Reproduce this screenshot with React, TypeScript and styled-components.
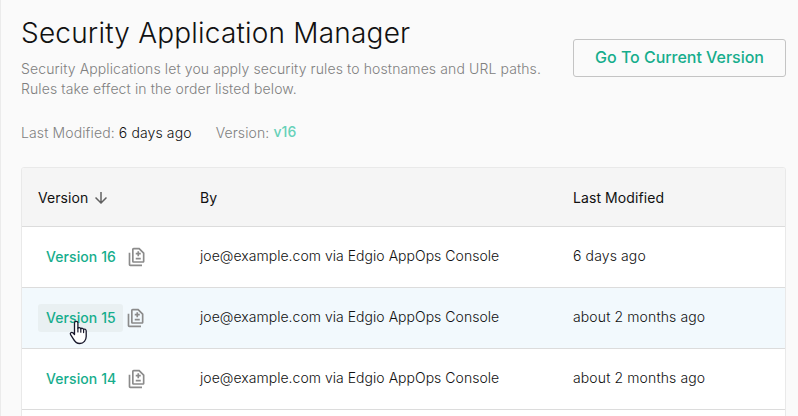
import React from "react";
import styled, { createGlobalStyle } from "styled-components";
import { MdArrowDownward, MdOutlineDifference } from "react-icons/md";

const GlobalStyle = createGlobalStyle`
  * { box-sizing: border-box; }
  body {
    margin: 0;
    background: #fafafa;
    font-family: Inter, "Liberation Sans", sans-serif;
    overflow: hidden;
  }
`;

const Page = styled.main`
  height: 416px;
  overflow: hidden;
  border-left: 1px solid #ebebeb;
  padding: 13px 12px 0 20px;
  background: #fafafa;
`;

const Header = styled.header`
  display: flex;
  justify-content: space-between;
  align-items: flex-start;
`;

const Title = styled.h1`
  margin: 0;
  font-size: 28px;
  line-height: 40px;
  font-weight: 300;
  letter-spacing: 0.2px;
  color: #111;
  white-space: nowrap;
`;

const Description = styled.p`
  margin: 6px 0 0;
  font-size: 14px;
  line-height: 20px;
  font-weight: 300;
  letter-spacing: 0.115px;
  color: #808080;
  white-space: nowrap;
`;

const OutlineButton = styled.button`
  width: 213px;
  height: 38px;
  margin-top: 26px;
  padding: 0 0 2px;
  border: 1px solid #c4c4c4;
  border-radius: 3px;
  background: transparent;
  color: #16ad8c;
  font: 500 16px/24px Inter, sans-serif;
  letter-spacing: -0.03px;
  white-space: nowrap;
`;

const Meta = styled.div`
  display: flex;
  gap: 24px;
  margin-top: 24px;
  font-size: 14px;
  line-height: 20px;
  font-weight: 300;
  letter-spacing: 0.12px;
  color: #808080;
  white-space: nowrap;
`;

const MetaItem = styled.div`
  display: flex;
  gap: 4px;
`;

const MetaValue = styled.span`
  color: #111;
`;

const VersionTag = styled.span`
  font-weight: 500;
  line-height: 18px;
  color: #66d1b8;
`;

const Table = styled.div`
  width: 765px;
  margin-top: 24px;
  border: 1px solid #e9e9e9;
  border-radius: 3px 3px 0 0;
  background: #fff;
  overflow: hidden;
`;

const Row = styled.div<{ $head?: boolean; $hovered?: boolean }>`
  display: grid;
  grid-template-columns: 162px 373px 1fr;
  align-items: center;
  height: ${(p) => (p.$head ? 59 : 61)}px;
  padding: ${(p) => (p.$head ? "2px 0 0 16px" : "0 0 0 16px")};
  border-bottom: 1px solid #dcdcdc;
  background: ${(p) => (p.$head ? "#f5f5f5" : p.$hovered ? "#f2f9fd" : "#fff")};
  font-size: 14px;
  line-height: 20px;
  font-weight: ${(p) => (p.$head ? 400 : 300)};
  letter-spacing: 0.08px;
  color: #111;
  white-space: nowrap;
`;

const Cell = styled.div`
  display: flex;
  align-items: center;
`;

const TextCell = styled.div`
  padding-bottom: 2px;
  letter-spacing: 0.03px;
`;

const DateCell = styled(TextCell)`
  letter-spacing: 0.12px;
`;

const SortIcon = styled(MdArrowDownward)`
  margin-left: 4px;
  color: #606060;
`;

const VersionLink = styled.a<{ $hovered?: boolean }>`
  position: relative;
  display: block;
  width: 85px;
  height: 28px;
  padding: 0 8px;
  border-radius: 3px;
  background: ${(p) => (p.$hovered ? "#e9f0f2" : "transparent")};
  color: #16ad8c;
  font-weight: 500;
  line-height: 28px;
`;

const DiffIcon = styled(MdOutlineDifference)<{ $hovered?: boolean }>`
  margin-left: ${(p) => (p.$hovered ? 3 : 4)}px;
  color: #8b8b8b;
`;

const Pointer = styled.svg`
  position: absolute;
  left: 31px;
  top: 16px;
`;

const HandCursor = () => (
  <Pointer width="19" height="25" viewBox="0 0 19 25" aria-hidden="true">
    <path
      d="M5.5 14.5V3a1.7 1.7 0 0 1 3.4 0v5.2c.5-.8 2.4-.8 2.9.5.7-.8 2.4-.5 2.8.7.9-.7 2.6-.2 2.6 1.6v5.5c0 3.6-2.5 7-6.4 7-3.2 0-5.1-1.8-6.5-4.6l-2.7-4.2c-1-1.7.9-3.1 2.3-1.9z"
      fill="#fff"
      stroke="#17172b"
      strokeWidth="1.3"
      strokeLinejoin="round"
    />
    <path d="M8.9 8v4M11.8 8.8v3.4M14.6 9.6v3" stroke="#17172b" strokeWidth="1.2" strokeLinecap="round" />
  </Pointer>
);

const versions = [
  { id: 16, modified: "6 days ago" },
  { id: 15, modified: "about 2 months ago", hovered: true },
  { id: 14, modified: "about 2 months ago" },
];

export default function App() {
  return (
    <>
      <GlobalStyle />
      <Page>
        <Header>
          <div>
            <Title>Security Application Manager</Title>
            <Description>
              Security Applications let you apply security rules to hostnames and URL paths.
              <br />
              Rules take effect in the order listed below.
            </Description>
          </div>
          <OutlineButton>Go To Current Version</OutlineButton>
        </Header>
        <Meta>
          <MetaItem>
            <span>Last Modified:</span>
            <MetaValue>6 days ago</MetaValue>
          </MetaItem>
          <MetaItem>
            <span>Version:</span>
            <VersionTag>v16</VersionTag>
          </MetaItem>
        </Meta>
        <Table>
          <Row $head>
            <Cell>
              Version
              <SortIcon size={18} />
            </Cell>
            <div>By</div>
            <div>Last Modified</div>
          </Row>
          {versions.map((v) => (
            <Row key={v.id} $hovered={v.hovered}>
              <Cell>
                <VersionLink $hovered={v.hovered}>
                  Version {v.id}
                  {v.hovered && <HandCursor />}
                </VersionLink>
                <DiffIcon size={20} $hovered={v.hovered} />
              </Cell>
              <TextCell>joe@example.com via Edgio AppOps Console</TextCell>
              <DateCell>{v.modified}</DateCell>
            </Row>
          ))}
          <Row />
        </Table>
      </Page>
    </>
  );
}
